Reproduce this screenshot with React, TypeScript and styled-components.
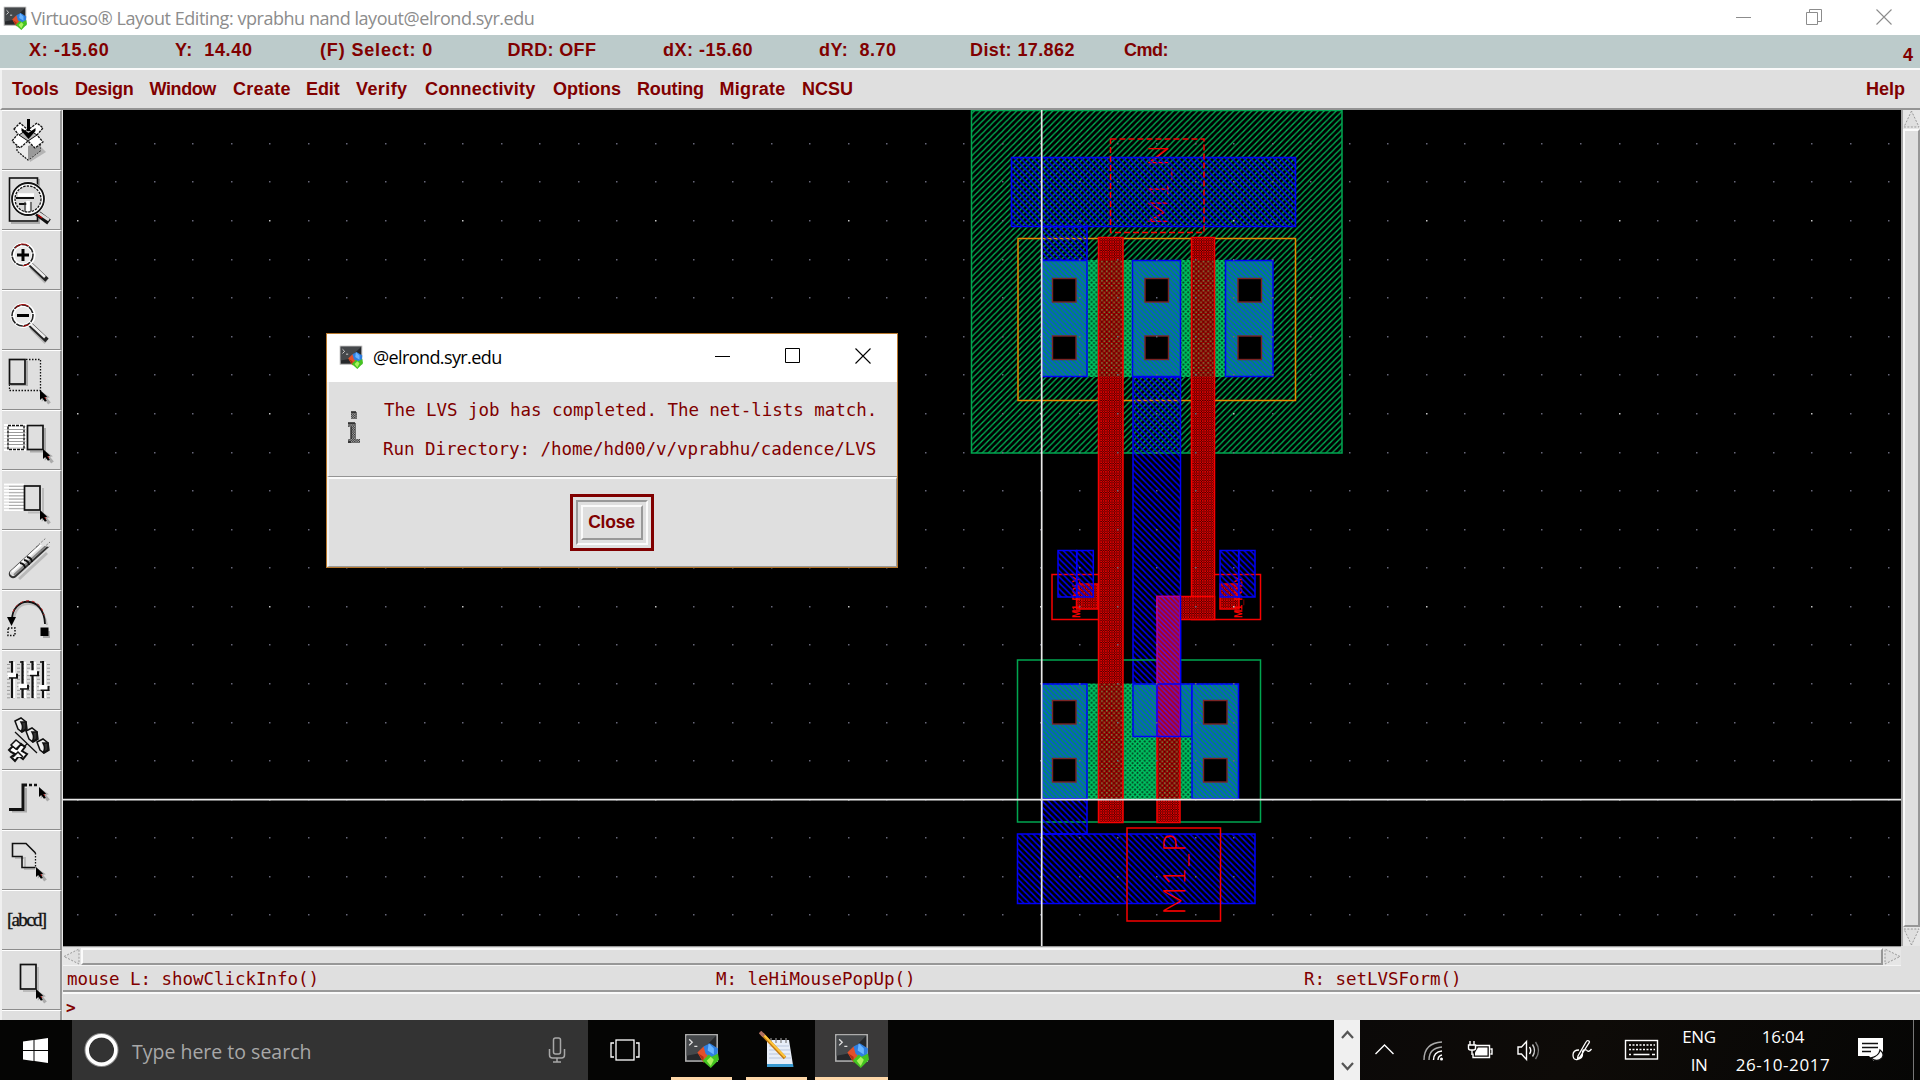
import React from 'react';
import styled, { createGlobalStyle } from 'styled-components';

const MAROON = '#800000';
const PANEL = '#dfdfdf';

const Global = createGlobalStyle`
  html, body { margin: 0; padding: 0; background: #fff; overflow: hidden; }
  * { box-sizing: border-box; }
`;

const Screen = styled.div`
  position: relative;
  width: 1920px;
  height: 1084px;
  display: flex;
  flex-direction: column;
  background: #fff;
  font-family: 'Liberation Sans', Arial, sans-serif;
  overflow: hidden;
`;

const TitleBar = styled.header`
  display: flex;
  align-items: center;
  height: 35px;
  padding: 0 28px 0 3px;
  background: #fff;
`;

const TitleText = styled.span<{ $color: string; $spacing: string; $left: number }>`
  flex: 1;
  margin-left: ${(p) => p.$left}px;
  font: 18px/24px 'Open Sans', 'Noto Sans', sans-serif;
  letter-spacing: ${(p) => p.$spacing};
  color: ${(p) => p.$color};
  white-space: pre;
`;

const Controls = styled.div<{ $gap: number }>`
  display: flex;
  gap: ${(p) => p.$gap}px;
  margin-top: -2px;
`;

const StatusBar = styled.div`
  display: flex;
  height: 35px;
  padding: 5px 7px 0 29px;
  background: #bccbcb;
  border-bottom: 2px solid #fafafa;
`;

const BoldText = styled.span<{ $w?: number; $drop?: number; $spacing?: number }>`
  width: ${(p) => (p.$w ? `${p.$w}px` : 'auto')};
  margin-top: ${(p) => p.$drop ?? 0}px;
  font: bold 18px/20px 'Liberation Sans', Arial, sans-serif;
  letter-spacing: ${(p) => p.$spacing ?? 0}px;
  color: ${MAROON};
  white-space: pre;
`;

const Spacer = styled.div`
  flex: 1;
`;

const MenuBar = styled.nav`
  display: flex;
  height: 40px;
  padding: 9px 15px 0 10px;
  background: ${PANEL};
  border-bottom: 2px solid #949494;
  border-left: 2px solid #f2f2f2;
`;

const Work = styled.div`
  display: flex;
  height: 910px;
  background: ${PANEL};
`;

const Tools = styled.aside`
  width: 63px;
  padding-left: 2px;
  overflow: hidden;
  border-right: 1px solid #e8e8e8;
  background: #f0f0f0;
`;

const ToolButton = styled.button`
  display: block;
  width: 60px;
  height: 60px;
  margin: 0;
  padding: 0;
  border: 0;
  border-top: 1px solid #fff;
  border-right: 2px solid #979797;
  border-bottom: 1px solid #8d8d8d;
  background: ${PANEL};
  svg { display: block; margin: -2px 0 0 -2px; }
`;

const Main = styled.div`
  flex: 1;
  display: flex;
  flex-direction: column;
`;

const CanvasRow = styled.div`
  display: flex;
  height: 836px;
`;

const Drawing = styled.svg`
  display: block;
  background: #000;
`;

const VScroll = styled.div`
  display: flex;
  flex-direction: column;
  width: 19px;
  border-left: 2px solid #a5a5a5;
`;

const HScroll = styled.div`
  display: flex;
  width: 1838px;
  height: 20px;
  padding-top: 1px;
  border-top: 1px solid #979797;
  border-bottom: 1px solid #f4f4f4;
`;

const Thumb = styled.div`
  flex: 1;
  border: 2px solid;
  border-color: #fbfbfb #979797 #979797 #fbfbfb;
  background: ${PANEL};
`;

const MouseLine = styled.div`
  display: flex;
  height: 26px;
  padding: 0 0 0 4px;
  border-bottom: 2px solid #999;
  background: ${PANEL};
`;

const Mono = styled.span<{ $w?: number }>`
  width: ${(p) => (p.$w ? `${p.$w}px` : 'auto')};
  font: 17.5px/26px 'DejaVu Sans Mono', monospace;
  letter-spacing: -0.04px;
  color: ${MAROON};
  white-space: pre;
`;

const PromptLine = styled.div`
  display: flex;
  height: 28px;
  padding-left: 3px;
  border-top: 2px solid #fafafa;
  font: bold 16px/28px 'DejaVu Sans Mono', monospace;
  color: ${MAROON};
`;

const Dialog = styled.section`
  position: absolute;
  left: 326px;
  top: 333px;
  width: 572px;
  height: 235px;
  display: flex;
  flex-direction: column;
  border: 1px solid #b8782c;
  background: ${PANEL};
`;

const DialogTitle = styled.div`
  display: flex;
  align-items: center;
  height: 48px;
  padding: 0 26px 2px 12px;
  background: #fff;
`;

const DialogBody = styled.div`
  display: flex;
  height: 95px;
  padding: 15px 0 0 18px;
  border-bottom: 1px solid #949494;
  border-left: 2px solid #f4f4f4;
`;

const Message = styled.div`
  display: flex;
  flex-direction: column;
  gap: 13px;
  margin-left: 22px;
`;

const MessageLine = styled(Mono)<{ $indent: number }>`
  margin-left: ${(p) => p.$indent}px;
`;

const DialogFoot = styled.div`
  flex: 1;
  display: flex;
  justify-content: center;
  align-items: flex-start;
  padding: 15px 2px 0 0;
  border-top: 2px solid #fafafa;
  border-left: 2px solid #f4f4f4;
  border-bottom: 1px solid #999;
  border-right: 1px solid #999;
`;

const DefaultRing = styled.div`
  width: 84px;
  height: 57px;
  padding: 3px;
  border: 3px solid ${MAROON};
`;

const Groove = styled.div`
  height: 100%;
  padding: 3px;
  border: 2px solid;
  border-color: #999 #fafafa #fafafa #999;
`;

const CloseButton = styled.button`
  display: block;
  width: 100%;
  height: 100%;
  padding: 0;
  border: 2px solid;
  border-color: #fafafa #999 #999 #fafafa;
  background: ${PANEL};
  font: bold 17.5px/29px 'Liberation Sans', Arial, sans-serif;
  letter-spacing: -0.2px;
  color: ${MAROON};
`;

const Taskbar = styled.footer`
  display: flex;
  height: 60px;
  background: #050504;
`;

const TaskCell = styled.div<{ $w: number; $bg?: string; $line?: number }>`
  display: flex;
  flex-direction: column;
  align-items: center;
  justify-content: center;
  position: relative;
  width: ${(p) => p.$w}px;
  background: ${(p) => p.$bg ?? 'transparent'};
  &::after {
    content: '';
    position: absolute;
    bottom: 0;
    height: 3px;
    width: ${(p) => p.$line ?? 0}px;
    background: #fdd7a8;
  }
`;

const Search = styled.div`
  display: flex;
  align-items: center;
  width: 516px;
  padding: 0 22px 0 12px;
  background: #333;
`;

const SearchText = styled.span`
  flex: 1;
  margin: 3px 0 0 13px;
  font: 19.5px/26px 'Open Sans', 'Noto Sans', sans-serif;
  letter-spacing: 0;
  color: #a8a8a8;
`;

const TrayScroll = styled.div`
  display: flex;
  width: 26px;
  background: #f0f0f0;
`;

const Tray = styled.div`
  display: flex;
  width: 560px;
  background: linear-gradient(120deg, #0b0908, #0e0b08 40%, #060605);
`;

const TwoLines = styled.div<{ $w: number; $spacing: number; $second: number }>`
  display: flex;
  flex-direction: column;
  width: ${(p) => p.$w}px;
  padding-top: 3px;
  text-align: center;
  font: 17px/27.5px 'Open Sans', 'Noto Sans', sans-serif;
  letter-spacing: ${(p) => p.$spacing}px;
  color: #fff;
  white-space: nowrap;
  span:last-child { letter-spacing: ${(p) => p.$second}px; }
`;

const PuttyIcon = ({ size }: { size: number }) => (
  <svg width={size} height={size} viewBox="0 0 34 34">
    <rect x="1" y="1" width="32" height="27" fill="#b0b0b0" />
    <rect x="2.5" y="2.5" width="29" height="24" fill="#26282b" />
    <path d="M2.5 2.5h29L14 20 2.5 22z" fill="#45484b" />
    <path d="M5 6l3 3-3 3M10 13h3" stroke="#ddd" strokeWidth="1.3" fill="none" />
    <path d="M13 19l6-6 6 8-6 8z" fill="#e2512b" />
    <path d="M14 20l5 3v5z" fill="#b03014" />
    <path d="M19 13l6-3 8 5-1 8-6 2-5-5z" fill="#2f7fe0" />
    <path d="M24 10l5 5v6l-6-4z" fill="#69b4ff" />
    <path d="M18 27l6-6 3 2 6-3 1 6-8 8z" fill="#45c321" />
    <path d="M22 27l4-4 3 3-3 6z" fill="#a8f25c" />
  </svg>
);

const WinControls = ({ color, gap, restore }: { color: string; gap: number; restore?: boolean }) => (
  <Controls $gap={gap}>
    <svg width="16" height="16" viewBox="0 0 16 16"><path d="M0 8.5h15" stroke={color} /></svg>
    <svg width="16" height="16" viewBox="0 0 16 16" fill="none" stroke={color}>
      {restore ? <path d="M.5 3.5h11v12H.5zM3.5 3.500V.5h12v12h-4" /> : <path d="M.5.5h14v14H.5z" />}
    </svg>
    <svg width="16" height="16" viewBox="0 0 16 16"><path d="M.5.5l15 15M15.500.5l-15 15" stroke={color} strokeWidth="1.1" /></svg>
  </Controls>
);

const Cursor = ({ x, y }: { x: number; y: number }) => (
  <g transform={`translate(${x} ${y}) scale(.9)`} stroke="none">
    <path d="M2 2v11l3-3 4 6 3-2-4-5 3-1z" fill="#aaa" />
    <path d="M0 0v11l2.500-2 3 4 2-1-2.500-4 3-.5z" fill="#000" />
    <path d="M5.500 8l1 2" stroke="#a00" />
  </g>
);

const Lens = ({ y, plus }: { y: number; plus?: boolean }) => (
  <g transform={`translate(0 ${y})`}>
    <path d="M31 36l15 15" stroke="#b5b5b5" strokeWidth="4" />
    <path d="M30 33l17 16" stroke="#222" strokeWidth="5" />
    <path d="M30 32l15 14" stroke="#eee" strokeWidth="2.500" />
    <circle cx="23" cy="24" r="10.500" fill="#e8e8e8" stroke="#fff" strokeWidth="4" />
    <circle cx="22.500" cy="24" r="10.500" fill="none" stroke="#222" strokeWidth="1.600" strokeDasharray="7 1" />
    <path d="M15 17a10 10 0 0 1 14-2M23 35l6-2" stroke="#a00" fill="none" />
    <path d={plus ? 'M17 24h12M23 18v12' : 'M17 24h12'} stroke="#000" strokeWidth="3" />
  </g>
);

const rowsOf = (n: number) => Array.from({ length: n }, (_, i) => i);

const toolIcons: React.ReactNode[] = [
  <g key="box">
    <path d="M30 52l16-10-6-6-12 8z" fill="#b4b4b4" />
    <path d="M17 33v8l11 9 12-9v-9L28 26z" fill="#ececec" stroke="#111" strokeWidth="1.200" strokeDasharray="2 1" />
    <path d="M28 36v14l12-9v-9z" fill="#999" />
    <path d="M14 19l6-6 8 7 9-7 6 5-6 7 6 7-8 6-7-7-8 7-8-7 6-7z" fill="#fff" stroke="#111" strokeWidth="1.300" strokeDasharray="2.500 1" />
    <path d="M19 25l9-6 9 6-9 6z" fill="#bbb" stroke="#111" />
    <path d="M28.500 9v12" stroke="#000" strokeWidth="3" />
    <path d="M21.500 18l7 5 7-5v3l-7 8-7-8z" fill="#000" />
  </g>,
  <g key="fit" fill="none">
    <path d="M11 53h28V9" stroke="#aaa" strokeWidth="2" />
    <rect x="9.500" y="8" width="28" height="43" stroke="#111" strokeWidth="1.600" />
    <path d="M37 43l12 9" stroke="#111" strokeWidth="6" />
    <path d="M37 42l12 8" stroke="#ddd" strokeWidth="3" />
    <path d="M38 45l4 3" stroke="#b00" strokeWidth="1.500" />
    <circle cx="28" cy="29" r="15" stroke="#fff" strokeWidth="5" fill="#d8d8d8" />
    <circle cx="28" cy="29" r="16" stroke="#111" strokeWidth="1.800" />
    <circle cx="28" cy="29" r="13" stroke="#111" strokeWidth="1.300" strokeDasharray="2.500 1" />
    <path d="M16 28h18M19 34h8" stroke="#111" strokeWidth="1.800" />
    <path d="M18 25h16M28 31v10" stroke="#fff" strokeWidth="3.500" />
    <path d="M25 32v10M31 32v9" stroke="#333" strokeWidth="1.200" />
  </g>,
  <Lens key="in" y={1} plus />,
  <Lens key="out" y={1.5} />,
  <g key="stretch" fill="none" stroke="#111">
    <path d="M27 11v24H11" stroke="#aaa" strokeWidth="2" />
    <rect x="9.500" y="9.500" width="15.500" height="24.500" strokeWidth="1.700" />
    <path d="M26 9.500h14.500v31h-31V35" strokeWidth="1.300" strokeDasharray="1.500 1.500" />
    <Cursor x={40} y={40} />
  </g>,
  <g key="copy" fill="none" stroke="#111">
    <path d="M4 15h36M4 18h22M4 21h22M4 24h22M4 27h22M4 30h22M4 33h22M4 36h22M4 40h22" stroke="#fff" strokeWidth="2" />
    <path d="M9 19.500h14M9 22.500h14M9 25.500h14M9 28.500h14M9 31.500h14M9 34.500h14" stroke="#999" />
    <path d="M8 15.500h16v24H8z" strokeWidth="1.400" strokeDasharray="3 1" />
    <path d="M30 41.500h15V18" stroke="#aaa" strokeWidth="2" />
    <rect x="27.500" y="15.500" width="15.500" height="24" strokeWidth="1.700" />
    <Cursor x={43} y={39} />
  </g>,
  <g key="move" fill="none" stroke="#111">
    {rowsOf(9).map((i) => <path key={i} d={`M4 ${14.5 + i * 3.2}h20`} stroke="#fff" strokeWidth="1.800" />)}
    {rowsOf(8).map((i) => <path key={i} d={`M9 ${16.3 + i * 3.2}h15`} stroke="#aaa" />)}
    <path d="M28 42.500h15V18" stroke="#bbb" strokeWidth="2" />
    <rect x="24.500" y="16" width="15.500" height="24" strokeWidth="1.700" />
    <Cursor x={40} y={40} />
  </g>,
  <g key="erase" fill="none">
    <path d="M19 49l28-26" stroke="#b9b9b9" strokeWidth="3" />
    <path d="M13 44L46 14" stroke="#333" strokeWidth="8.500" strokeLinecap="round" />
    <path d="M13 43L46 13" stroke="#dedede" strokeWidth="6" strokeLinecap="round" />
    <path d="M14 45L47 15" stroke="#888" strokeWidth="2" />
    <path d="M12 42L42 14" stroke="#fff" strokeWidth="2" />
    <path d="M20 33q5 1 5 5M24 30q5 1 5 5M27 27q5 1 5 5" stroke="#111" strokeWidth="1.800" />
    <path d="M37 14l11-10 5 0v9l-4 4z" fill={PANEL} />
    <path d="M36 17L46 8M41 20L50 12" stroke="#777" strokeDasharray="2 1.500" />
  </g>,
  <g key="undo" fill="none">
    <path d="M14 28Q17 13 30 14T47 35" stroke="#bbb" strokeWidth="2" />
    <path d="M12 30C12 6 44 4 45 34" stroke="#111" strokeWidth="1.800" />
    <path d="M13 22C18 7 40 6 44 25" stroke="#b22" strokeWidth="1" strokeDasharray="3 3" />
    <path d="M7 27h9l-4.500 9z" fill="#000" />
    <rect x="43" y="41" width="7" height="7" fill="#aaa" />
    <rect x="40.500" y="37.500" width="8" height="8.500" fill="#000" />
    <rect x="8" y="38" width="7" height="7.500" stroke="#111" strokeWidth="1.500" strokeDasharray="1.500 1.500" />
  </g>,
  <g key="props" fill="none">
    {rowsOf(10).map((i) => <path key={i} d={`M7 ${14.5 + i * 3.7}h43`} stroke="#999" strokeDasharray="3 2" />)}
    <path d="M14 12v36M25 12v36M35 12v36M45 12v36" stroke="#fff" strokeWidth="2" />
    <path d="M12 11v37M22.500 11v37M32.500 11v37M43 11v37" stroke="#111" strokeWidth="2.200" />
    <path d="M9 12h3M20 12h3M30 12h3M40 12h3" stroke="#111" strokeWidth="1.500" />
    {[[12, 25.7], [23, 36.7], [33, 23.3], [43.5, 38]].map(([x, y]) => (
      <g key={x}>
        <rect x={x - 3} y={y - 2} width="9" height="5" fill="#111" />
        <rect x={x - 4.500} y={y - 3} width="8.500" height="4.500" fill="#fff" />
      </g>
    ))}
  </g>,
  <g key="tree" stroke="#111" strokeWidth="1.500">
    <path d="M15 22l22 21M27 34l-9 8" fill="none" strokeWidth="1.300" />
    {[[21, 15], [32, 25], [43, 36]].map(([x, y]) => (
      <g key={x}>
        <path d={`M${x - 6} ${y - 4}l6-3 5 4 1 7-5 3-4-3z`} fill="#eee" />
        <path d={`M${x} ${y - 3}l5 0 0 7-5 3q3-5 0-10z`} fill="#333" />
      </g>
    ))}
    <path d="M9 40l4-4 4 3 4-5 4 3-3 4 5 3-4 5-4-3-4 5-4-4 4-3-4-2z" fill="#fff" strokeWidth="2" />
    <path d="M11 35l5-5 5 4-5 5zM13 47l5-5 5 5" fill="#f4f4f4" />
  </g>,
  <g key="path" fill="none" stroke="#111">
    <path d="M12 41.500h14V18" stroke="#aaa" strokeWidth="2" />
    <path d="M9 39.500h14V15h4" strokeWidth="3" />
    <path d="M29 15h10" strokeWidth="2.500" strokeDasharray="3 2" />
    <Cursor x={39} y={17} />
  </g>,
  <g key="poly" fill="none" stroke="#111">
    <path d="M15 28h10v11h10" stroke="#bbb" strokeWidth="2" />
    <path d="M35.500 37.500H22V26.500h-9.500v-13H26l9.500 9.500" strokeWidth="1.600" />
    <path d="M35.500 23v14" strokeWidth="1.300" strokeDasharray="1.500 1.500" />
    <Cursor x={36} y={37} />
  </g>,
  <g key="label">
    <text x="7" y="35.500" fontFamily="Liberation Serif, serif" fontSize="19" textLength="40" fill="#111" stroke="#111" strokeWidth=".35">[abcd]</text>
  </g>,
  <g key="rect" fill="none" stroke="#111">
    <path d="M23 41h15V17" stroke="#bbb" strokeWidth="2" />
    <rect x="20.500" y="14.500" width="15.500" height="24.500" strokeWidth="1.700" />
    <Cursor x={36} y={39} />
  </g>,
  <g key="next" />,
];

type Box = [number, number, number, number];

const Area = ({ b, fill, stroke, dash }: { b: Box; fill?: string; stroke?: string; dash?: string }) => (
  <rect
    x={b[0]} y={b[1]} width={b[2] - b[0]} height={b[3] - b[1]}
    fill={fill ? `url(#${fill})` : 'none'} stroke={stroke ?? 'none'} strokeWidth="1.500" strokeDasharray={dash}
  />
);

const BLUE = '#0000f8';
const RED = '#f80000';
const GREEN = '#00a650';

const contacts: [number, number][] = [
  [1052, 278], [1144.500, 278], [1237.500, 278],
  [1052, 335.5], [1144.500, 335.5], [1237.500, 335.5],
  [1052, 700], [1203, 700], [1052, 758], [1203, 758],
];

const LayerText = ({ x, y, size, length, bold, children }: { x: number; y: number; size: number; length: number; bold?: boolean; children: string }) => (
  <text
    transform={`translate(${x} ${y}) rotate(-90)`} fontFamily={bold ? 'Liberation Sans, sans-serif' : 'Lato, sans-serif'}
    fontWeight={bold ? 700 : 300} fontSize={size} textLength={length} lengthAdjust="spacing" fill={RED}
  >
    {children}
  </text>
);

const Hatch = ({ id, color, size, width, rising }: { id: string; color: string; size: number; width: number; rising?: boolean }) => (
  <pattern id={id} width={size} height={size} patternUnits="userSpaceOnUse">
    <path
      d={rising
        ? `M-1 ${size + 1}L${size + 1}-1M-1 1L1-1M${size - 1} ${size + 1}l2-2`
        : `M-1-1L${size + 1} ${size + 1}M${size - 1}-1l2 2M-1 ${size - 1}l2 2`}
      stroke={color} strokeWidth={width}
    />
  </pattern>
);

const LayoutCanvas = () => (
  <Drawing width="1838" height="836" viewBox="63 110 1838 836">
    <defs>
      <Hatch id="well" color="#00b456" size={6.03} width={1.3} rising />
      <Hatch id="metal" color="#0000f4" size={6.03} width={1.5} />
      <pattern id="active" width="4.830" height="4.830" patternUnits="userSpaceOnUse">
        <rect width="4.830" height="4.830" fill="#004a24" />
        <path d="M-1-1l6.830 6.830M-1 5.830L5.830-1" stroke="#00c864" strokeWidth="1.400" />
      </pattern>
      <pattern id="diff" width="4" height="4" patternUnits="userSpaceOnUse" patternTransform="scale(1.206)">
        <rect width="4" height="4" fill="#00925a" />
        <path d="M0 0h2v1H0zM1 1h2v1H1zM2 2h2v1H2zM3 3h1v1H3zM0 3h1v1H0z" fill="#0a52dc" />
      </pattern>
      <pattern id="poly" width="2.420" height="2.420" patternUnits="userSpaceOnUse">
        <rect width="2.420" height="2.420" fill="#4a0000" />
        <path d="M-.5-.5l3.420 3.420M-.5 2.920L2.920-.5" stroke="#e00000" strokeWidth=".8" />
      </pattern>
      <pattern id="gate" width="4.830" height="4.830" patternUnits="userSpaceOnUse">
        <rect width="4.830" height="4.830" fill="#980000" />
        <rect x="0" y="0" width="1.500" height="1.500" fill="#6f8f4a" />
        <rect x="2.400" y="2.400" width="1.500" height="1.500" fill="#6f7f3a" />
        <rect x="2.400" y="0" width="1.200" height="1.200" fill="#300" />
        <rect x="0" y="2.400" width="1.200" height="1.200" fill="#300" />
      </pattern>
      <pattern id="mix" width="4.830" height="4.830" patternUnits="userSpaceOnUse">
        <rect width="4.830" height="4.830" fill="#b00018" />
        <path d="M-1-1l6.830 6.830M3.830-1l2 2M-1 3.830l2 2" stroke="#5a10e0" strokeWidth="1.400" />
      </pattern>
    </defs>

    <Area b={[971.5, 110.5, 1342, 453]} fill="well" stroke={GREEN} />
    <Area b={[1018, 238.5, 1295.500, 400.500]} stroke="#e88a00" />
    <LayerText x={1168} y={225} size={28} length={80}>M1_N</LayerText>
    <Area b={[1011.500, 157.500, 1295.500, 226.500]} fill="metal" stroke={BLUE} />
    <Area b={[1042, 226.500, 1087, 260.500]} fill="metal" stroke={BLUE} />
    <Area b={[1110.500, 139, 1204, 232.500]} stroke={RED} dash="6 3" />

    <Area b={[1042, 260, 1273, 377]} fill="active" />
    <Area b={[1133, 377, 1180.500, 737]} fill="metal" stroke={BLUE} />
    {([[1042, 260.500, 1087, 376.500], [1132.500, 260.500, 1180.500, 376.500], [1225.500, 260.500, 1273, 376.500]] as Box[]).map((b) => (
      <Area key={b[0]} b={b} fill="diff" stroke={BLUE} />
    ))}

    <Area b={[1017.500, 660, 1260.500, 822]} stroke={GREEN} />
    <Area b={[1042, 683.500, 1238.500, 799]} fill="active" />
    <Area b={[1042, 684, 1087, 799]} fill="diff" stroke={BLUE} />
    <Area b={[1133, 684, 1192, 736.500]} fill="diff" stroke={BLUE} />
    <Area b={[1192, 684, 1238.500, 799]} fill="diff" stroke={BLUE} />
    <Area b={[1042, 799, 1087, 834]} fill="metal" stroke={BLUE} />
    <Area b={[1017.500, 834, 1255, 903.500]} fill="metal" stroke={BLUE} />
    <Area b={[1127, 828, 1220.500, 921]} stroke={RED} />
    <LayerText x={1185} y={915} size={31} length={81}>M1_P</LayerText>

    <path d="M1098 574.500h-46v45h46M1215 574.500h45.500v45H1215" fill="none" stroke={RED} strokeWidth="1.500" />
    <Area b={[1076.500, 584, 1098, 609]} fill="poly" stroke={RED} />
    <Area b={[1220, 584, 1239, 609]} fill="poly" stroke={RED} />
    <LayerText x={1080} y={618} size={10} length={42} bold>M1_POLY</LayerText>
    <LayerText x={1242} y={618} size={10} length={42} bold>M1_POLY</LayerText>
    <Area b={[1058, 550.500, 1076.700, 597]} fill="metal" stroke={BLUE} />
    <Area b={[1076.700, 550.500, 1093.300, 597]} fill="metal" stroke={BLUE} />
    <Area b={[1220, 550.500, 1238.700, 597]} fill="metal" stroke={BLUE} />
    <Area b={[1238.700, 550.500, 1255, 597]} fill="metal" stroke={BLUE} />

    <Area b={[1098.500, 237.500, 1123, 822.500]} fill="poly" stroke={RED} />
    <Area b={[1191.500, 237.500, 1214.500, 619.500]} fill="poly" stroke={RED} />
    <Area b={[1157, 596.500, 1214.500, 619.500]} fill="poly" stroke={RED} />
    <Area b={[1157, 736.500, 1180, 822.500]} fill="poly" stroke={RED} />
    <Area b={[1099.500, 260, 1122, 377]} fill="gate" />
    <Area b={[1192.500, 260, 1213.500, 377]} fill="gate" />
    <Area b={[1099.500, 683.500, 1122, 799]} fill="gate" />
    <Area b={[1158, 737, 1179, 799]} fill="gate" />
    <Area b={[1157, 596.500, 1180, 736.500]} fill="mix" stroke="#b000a0" />
    <path d="M1180.500 596v140.500H1157V684h23" fill="none" stroke={BLUE} strokeWidth="1.500" />

    {contacts.map(([x, y]) => (
      <rect key={`${x}-${y}`} x={x + 0.5} y={y + 0.5} width="23.500" height="23.500" fill="#000" stroke="#7a2424" strokeWidth="1.400" />
    ))}

    {rowsOf(48).map((i) =>
      rowsOf(21).map((j) => {
        const bright = i % 5 === 0 && j % 5 === 2;
        return (
          <rect
            key={`${i}-${j}`} x={Math.round(76.6 + i * 38.55)} y={Math.round(142.900 + j * 38.58)}
            width="1.500" height="1.500" fill={bright ? '#c4c4c4' : '#666678'}
          />
        );
      }),
    )}
    <path d="M1041.700 110v836M63 799.700h1838" stroke="#e8e8e8" strokeWidth="1.700" />
  </Drawing>
);

const menus: [string, number, number][] = [
  ['Tools', 63, 0], ['Design', 74.5, -0.25], ['Window', 83.5, -0.4], ['Create', 73, 0.3], ['Edit', 50, -0.1], ['Verify', 69, 0.4],
  ['Connectivity', 128, 0.2], ['Options', 84, 0], ['Routing', 82.500, -0.15], ['Migrate', 82.500, 0.3], ['NCSU', 60, 0],
];

const readouts: [string, number, number][] = [
  ['X: -15.60', 146, 0.7], ['Y:  14.40', 145, 0.65], ['(F) Select: 0', 187.500, 0.85], ['DRD: OFF', 155.500, 0.35],
  ['dX: -15.60', 156, 0.5], ['dY:  8.70', 151, 0.55], ['Dist: 17.862', 154, 0.4], ['Cmd:', 60, -0.5],
];

const Arrow = ({ d, w, h }: { d: string; w: number; h: number }) => (
  <svg width={w} height={h} viewBox={`0 0 ${w} ${h}`}>
    <rect width={w} height={h} fill="#e6e6e6" />
    <path d={d} fill={PANEL} stroke="#999" strokeDasharray="2 1.500" />
  </svg>
);

export default function App() {
  return (
    <Screen>
      <Global />
      <TitleBar>
        <PuttyIcon size={24} />
        <TitleText $color="#8c8c8c" $spacing="-0.450px" $left={4}>Virtuoso® Layout Editing: vprabhu nand layout@elrond.syr.edu</TitleText>
        <WinControls color="#8c8c8c" gap={54} restore />
      </TitleBar>
      <StatusBar>
        {readouts.map(([t, w, s]) => <BoldText key={t} $w={w} $spacing={s}>{t}</BoldText>)}
        <Spacer />
        <BoldText $drop={5}>4</BoldText>
      </StatusBar>
      <MenuBar>
        {menus.map(([t, w, s]) => <BoldText key={t} $w={w} $spacing={s}>{t}</BoldText>)}
        <Spacer />
        <BoldText>Help</BoldText>
      </MenuBar>
      <Work>
        <Tools>
          {toolIcons.map((icon, i) => (
            <ToolButton key={i}><svg width="58" height="58" viewBox="0 0 58 58">{icon}</svg></ToolButton>
          ))}
        </Tools>
        <Main>
          <CanvasRow>
            <LayoutCanvas />
            <VScroll>
              <Arrow w={17} h={19} d="M8.500 1L1 17h15z" />
              <Thumb />
              <Arrow w={17} h={19} d="M8.500 18L1 2h15z" />
            </VScroll>
          </CanvasRow>
          <HScroll>
            <Arrow w={18} h={17} d="M1 8.500L16 1v15z" />
            <Thumb />
            <Arrow w={18} h={17} d="M17 8.500L2 1v15z" />
          </HScroll>
          <MouseLine>
            <Mono $w={649}>mouse L: showClickInfo()</Mono>
            <Mono $w={588}>M: leHiMousePopUp()</Mono>
            <Mono>R: setLVSForm()</Mono>
          </MouseLine>
          <PromptLine>&gt;</PromptLine>
        </Main>
      </Work>
      <Taskbar>
        <TaskCell $w={71}>
          <svg width="25" height="25" viewBox="0 0 25 25" fill="#fff"><path d="M0 3.600l10.500-1.500V12H0zM11.500 2L25 0v12H11.500zM0 13h10.500v9.900L0 21.400zM11.500 13H25v12l-13.500-2z" /></svg>
        </TaskCell>
        <TaskCell $w={1} />
        <Search>
          <svg width="35" height="36" viewBox="0 0 35 36"><circle cx="17.500" cy="18" r="14.800" fill="none" stroke="#8a8a8a" strokeWidth="4.500" /><circle cx="17.500" cy="18" r="14.300" fill="none" stroke="#fff" strokeWidth="3.500" /></svg>
          <SearchText>Type here to search</SearchText>
          <svg width="18" height="26" viewBox="0 0 18 26" fill="none" stroke="#a8a8a8" strokeWidth="1.500"><rect x="5.500" y="1" width="7" height="16" rx="2" /><path d="M1.500 12v6q0 3 3 3h9q3 0 3-3v-6M9 21v4M5 25h8" /></svg>
        </Search>
        <TaskCell $w={73}>
          <svg width="30" height="22" viewBox="0 0 30 22" fill="none" stroke="#fff" strokeWidth="1.300"><rect x="6" y="1" width="18" height="20" /><path d="M4 4H1v14h3M26 4h3v14h-3" /></svg>
        </TaskCell>
        <TaskCell $w={81} $line={61}><PuttyIcon size={35} /></TaskCell>
        <TaskCell $w={69} $line={61}>
          <svg width="36" height="38" viewBox="0 0 36 38">
            <path d="M8 9h22l4 25H8z" fill="#e8eef8" />
            <path d="M8 33h26l.5 3H8z" fill="#3a9ad0" />
            <path d="M10 15h20M10 19h21M10 23h21M10 27h22" stroke="#b9c6dd" />
            <path d="M12 7v5M17 7v5M22 7v5M27 7v5" stroke="#888" strokeWidth="1.300" />
            <path d="M3 3L26 27" stroke="#c47a10" strokeWidth="3.500" />
            <path d="M4 3L26 26" stroke="#ffc63a" strokeWidth="2" />
            <path d="M1 1l4 4" stroke="#b07060" strokeWidth="3.500" />
          </svg>
        </TaskCell>
        <TaskCell $w={4} />
        <TaskCell $w={73} $line={73} $bg="#3a3939"><PuttyIcon size={35} /></TaskCell>
        <Spacer />
        <TrayScroll>
          <svg width="26" height="60" viewBox="0 0 26 60" fill="none" stroke="#555" strokeWidth="2.200"><path d="M8 18l5.500-6 5.500 6M8 43l5.500 6 5.500-6" /></svg>
        </TrayScroll>
        <Tray>
          <svg width="308" height="60" viewBox="1360 1020 308 60" fill="none" stroke="#fff" strokeWidth="1.400">
            <path d="M1375.500 1054l9-9 9 9" />
            <g stroke="#aaa">
              <path d="M1424 1060q0-17 18-18M1429 1060q0-12 13-13" />
              <path d="M1433.500 1060q0-8 8.500-9M1438 1060q0-4 4-5" stroke="#fff" />
            </g>
            <circle cx="1441.500" cy="1059" r="1.500" fill="#fff" stroke="none" />
            <path d="M1476 1045.500h13.500v12h-16.500v-4M1490.500 1049h1.500v5h-1.500" />
            <path d="M1478 1047.500h9.500v8H1475v-3z" fill="#fff" stroke="none" />
            <path d="M1470 1041v4M1474 1041v4M1468.500 1045h7v3q0 2-2 2h-3q-2 0-2-2zM1472 1050v5" />
            <path d="M1518 1047h3.500l5-5.500v18l-5-5.500h-3.500zM1529.500 1047q2.500 3.500 0 7" />
            <path d="M1532.500 1044.500q4 6 0 12" stroke="#ccc" />
            <path d="M1535.500 1042q6 8.500 0 17" stroke="#777" />
            <path d="M1589 1041q-2-1-3 1l-8 14-.5 3 2.500-2 9-14q1-1 0-2zM1579 1050q-6 0-6 5t4 4.500q6-1 5.500-6t4-3.500q2 3 5-1" strokeWidth="1.300" />
            <rect x="1625.500" y="1040.500" width="32" height="18.500" />
            <path d="M1629 1045h26M1629 1049.500h26" strokeDasharray="2 1.500" />
            <path d="M1629 1054.500h2M1633.500 1054.500h16M1652 1054.500h3" />
          </svg>
          <TwoLines $w={62} $spacing={-0.4} $second={-0.4}><span>ENG</span><span>IN</span></TwoLines>
          <TwoLines $w={106} $spacing={-0.2} $second={0.6}><span>16:04</span><span>26-10-2017</span></TwoLines>
          <svg width="84" height="60" viewBox="1836 1020 84 60">
            <path d="M1858 1038h25v18h-9v5l-5-5h-11z" fill="#fff" />
            <path d="M1862 1043.500h16M1862 1047.500h16M1862 1051.500h9" stroke="#111" strokeWidth="1.300" />
            <path d="M1880 1050q-1 6-9 8 6 5 11 0 3-4-2-8z" fill="#fff" stroke="#111" strokeWidth="1.300" />
            <path d="M1913.500 1020v60" stroke="#777" />
          </svg>
        </Tray>
      </Taskbar>
      <Dialog>
        <DialogTitle>
          <PuttyIcon size={24} />
          <TitleText $color="#000" $spacing="-0.600px" $left={10}>@elrond.syr.edu</TitleText>
          <WinControls color="#000" gap={54} />
        </DialogTitle>
        <DialogBody>
          <svg width="14" height="34" viewBox="0 0 14 34" style={{ marginTop: 13 }}>
            <defs>
              <pattern id="stipple" width="2.400" height="2.400" patternUnits="userSpaceOnUse">
                <rect width="2.400" height="2.400" fill="#bbb" /><path d="M0 0h1.200v1.200H0zM1.200 1.200h1.200v1.200H1.200z" fill="#222" />
              </pattern>
            </defs>
            <path d="M4 2h6v7H4z" fill="url(#stipple)" />
            <path d="M1 13h8v16h4v4H1v-4h3V17H1z" fill="url(#stipple)" />
            <path d="M1 13h7M4 17v12M1 32h3M4 2h5" stroke="#222" strokeWidth="1.300" />
          </svg>
          <Message>
            <MessageLine $indent={1}>The LVS job has completed. The net-lists match.</MessageLine>
            <MessageLine $indent={0}>Run Directory: /home/hd00/v/vprabhu/cadence/LVS</MessageLine>
          </Message>
        </DialogBody>
        <DialogFoot>
          <DefaultRing><Groove><CloseButton>Close</CloseButton></Groove></DefaultRing>
        </DialogFoot>
      </Dialog>
    </Screen>
  );
}
